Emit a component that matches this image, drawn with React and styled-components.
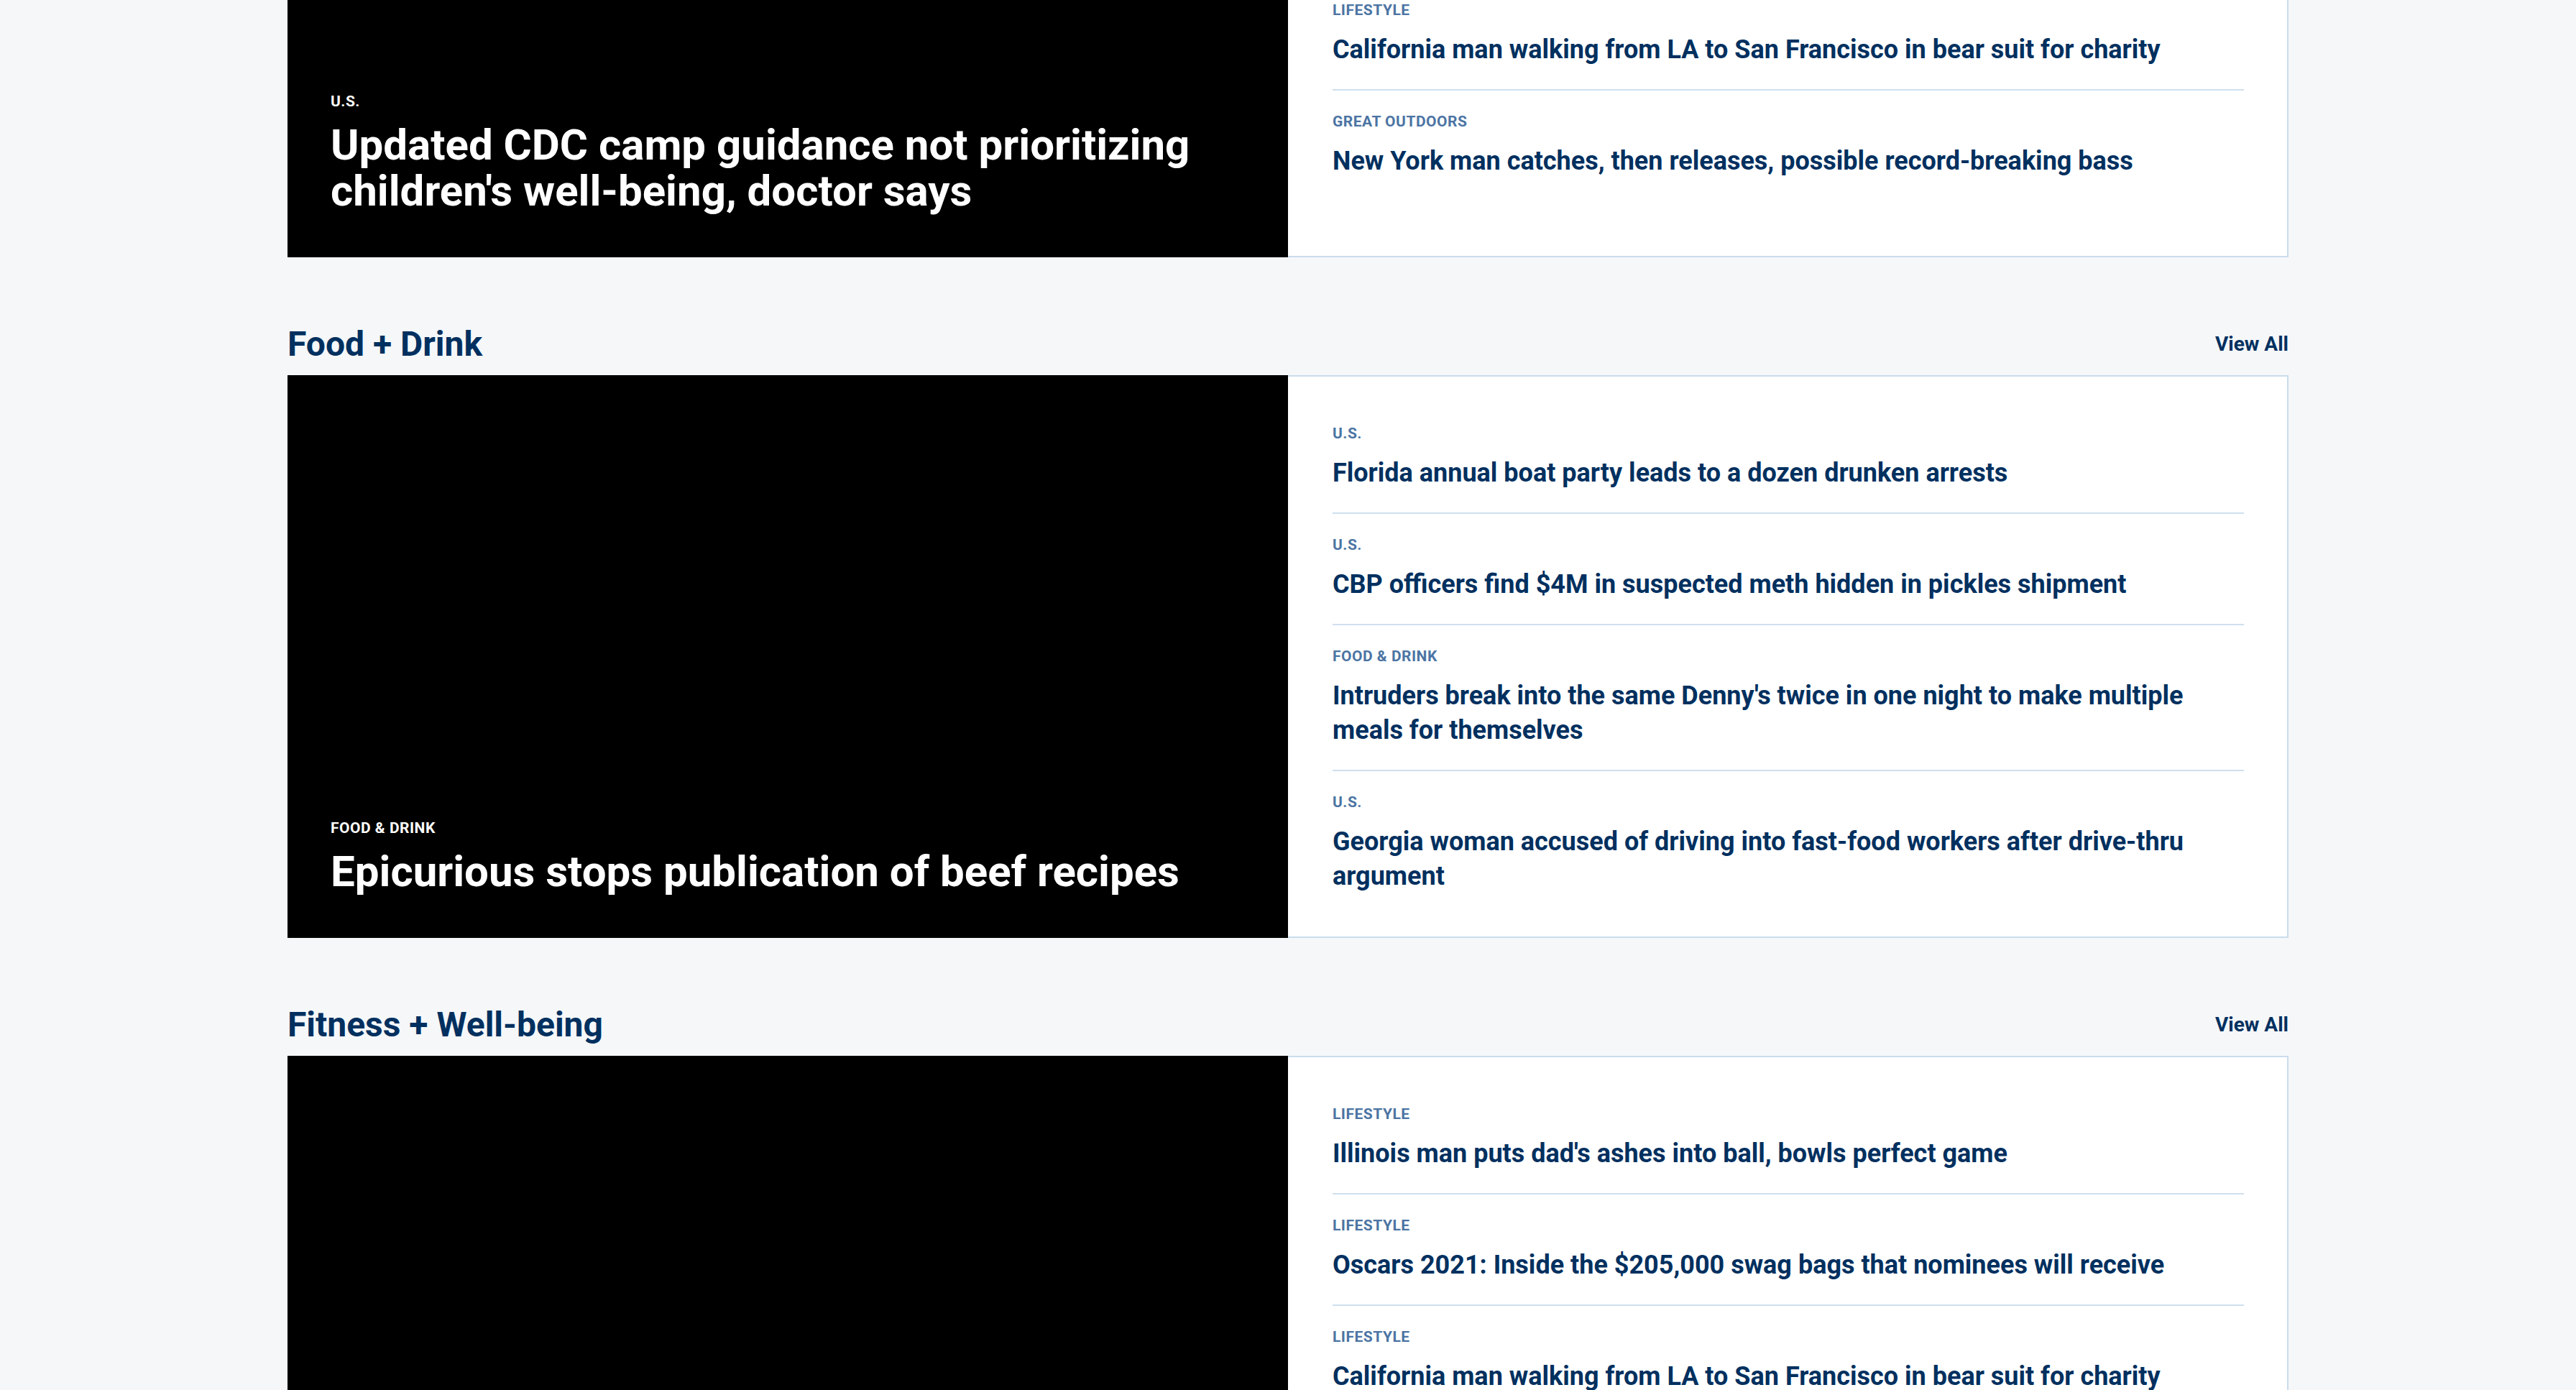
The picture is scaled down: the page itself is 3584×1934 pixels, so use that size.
import React from "react";
import styled, { createGlobalStyle } from "styled-components";

const GlobalStyle = createGlobalStyle`
  html, body {
    margin: 0;
    padding: 0;
    background: #f5f7f9;
    font-family: Roboto, "Liberation Sans", Arial, sans-serif;
    -webkit-font-smoothing: antialiased;
  }
  * { box-sizing: border-box; }
`;

const Page = styled.main`
  width: 2784px;
  margin: -589px auto 0;
`;

const Section = styled.section`
  padding-top: 93px;
`;

const SectionHeader = styled.header`
  display: flex;
  justify-content: space-between;
  align-items: center;
  height: 56px;
  margin-bottom: 15px;
`;

const SectionTitle = styled.h2`
  margin: 0;
  font-size: 48px;
  line-height: 56px;
  font-weight: 700;
  color: #00305f;
`;

const ViewAll = styled.a`
  font-size: 28px;
  line-height: 32px;
  font-weight: 700;
  color: #00305f;
  text-decoration: none;
`;

const Block = styled.div`
  display: grid;
  grid-template-columns: 1fr 1fr;
`;

const Feature = styled.a`
  display: flex;
  flex-direction: column;
  justify-content: flex-end;
  aspect-ratio: 16 / 9;
  background: #000;
  padding: 0 60px 60px;
  color: #fff;
  text-decoration: none;
`;

const FeatureKicker = styled.span`
  font-size: 21px;
  line-height: 24px;
  font-weight: 700;
  letter-spacing: 0.5px;
  text-transform: uppercase;
  margin-bottom: 17px;
`;

const FeatureTitle = styled.h3`
  margin: 0;
  font-size: 60px;
  line-height: 64px;
  font-weight: 700;
`;

const Panel = styled.div`
  background: #fff;
  border: 2px solid #cadcec;
  border-left: none;
  padding: 36px 60px 0 62px;
  overflow: hidden;
`;

const List = styled.ul`
  list-style: none;
  margin: 0;
  padding: 0;
`;

const Item = styled.li`
  display: flex;
  flex-direction: column;
  gap: 19px;
  padding: 31px 0;
  border-top: 2px solid #cfe0ef;

  &:first-child {
    border-top: none;
  }
`;

const Kicker = styled.span`
  font-size: 21px;
  line-height: 24px;
  font-weight: 700;
  letter-spacing: 0.5px;
  text-transform: uppercase;
  color: #4b74a3;
`;

const ItemTitle = styled.a`
  font-size: 36px;
  line-height: 48px;
  font-weight: 700;
  color: #00305f;
  text-decoration: none;
`;

const sections = [
  {
    title: "Lifestyle",
    feature: {
      kicker: "U.S.",
      title: "Updated CDC camp guidance not prioritizing children's well-being, doctor says",
    },
    items: [
      { kicker: "Lifestyle", title: "Illinois man puts dad's ashes into ball, bowls perfect game" },
      {
        kicker: "Food & Drink",
        title: "Intruders break into the same Denny's twice in one night to make multiple meals for themselves",
      },
      { kicker: "Lifestyle", title: "California man walking from LA to San Francisco in bear suit for charity" },
      { kicker: "Great Outdoors", title: "New York man catches, then releases, possible record-breaking bass" },
    ],
  },
  {
    title: "Food + Drink",
    feature: { kicker: "Food & Drink", title: "Epicurious stops publication of beef recipes" },
    items: [
      { kicker: "U.S.", title: "Florida annual boat party leads to a dozen drunken arrests" },
      { kicker: "U.S.", title: "CBP officers find $4M in suspected meth hidden in pickles shipment" },
      {
        kicker: "Food & Drink",
        title: "Intruders break into the same Denny's twice in one night to make multiple meals for themselves",
      },
      {
        kicker: "U.S.",
        title: "Georgia woman accused of driving into fast-food workers after drive-thru argument",
      },
    ],
  },
  {
    title: "Fitness + Well-being",
    feature: { kicker: "Lifestyle", title: "Oscars 2021: Inside the $205,000 swag bags that nominees will receive" },
    items: [
      { kicker: "Lifestyle", title: "Illinois man puts dad's ashes into ball, bowls perfect game" },
      { kicker: "Lifestyle", title: "Oscars 2021: Inside the $205,000 swag bags that nominees will receive" },
      { kicker: "Lifestyle", title: "California man walking from LA to San Francisco in bear suit for charity" },
    ],
  },
];

export default function App() {
  return (
    <>
      <GlobalStyle />
      <Page>
        {sections.map((s) => (
          <Section key={s.title}>
            <SectionHeader>
              <SectionTitle>{s.title}</SectionTitle>
              <ViewAll href="#">View All</ViewAll>
            </SectionHeader>
            <Block>
              <Feature href="#">
                <FeatureKicker>{s.feature.kicker}</FeatureKicker>
                <FeatureTitle>{s.feature.title}</FeatureTitle>
              </Feature>
              <Panel>
                <List>
                  {s.items.map((it, i) => (
                    <Item key={i}>
                      <Kicker>{it.kicker}</Kicker>
                      <ItemTitle href="#">{it.title}</ItemTitle>
                    </Item>
                  ))}
                </List>
              </Panel>
            </Block>
          </Section>
        ))}
      </Page>
    </>
  );
}
